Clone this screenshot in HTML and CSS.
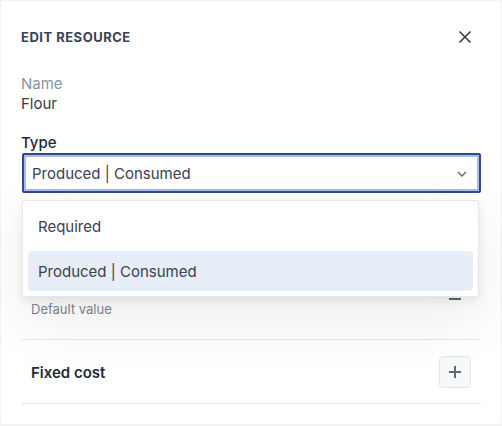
FILE: index.html
```html
<html>
  <head>
    <meta charset="utf-8">
    <title>Edit resource</title>
    <link rel="stylesheet" href="styles.css">
  </head>
<body>

<div class="panel">
  <div class="panel-head">
    <h2>Edit resource</h2>
    <button class="close" title="Close">
      <svg width="14" height="14" viewBox="0 0 14 14"><path d="M1.5 1.5l11 11M12.5 1.5l-11 11" stroke="#3b4350" stroke-width="1.7" fill="none"/></svg>
    </button>
  </div>

  <div class="field">
    <div class="field-label">Name</div>
    <div class="field-value">Flour</div>
  </div>

  <div class="field type-field">
    <label class="type-label">Type</label>
    <div class="select">
      <span>Produced | Consumed</span>
      <svg width="10" height="6" viewBox="0 0 10 6"><path d="M1 1l4 4 4-4" stroke="#5f6876" stroke-width="1.4" fill="none"/></svg>
    </div>

    <!-- open dropdown -->
    <ul class="menu">
      <li>Required</li>
      <li class="active">Produced | Consumed</li>
    </ul>
  </div>

  <div class="row row-default">
    <div class="row-hint">Default value</div>
    <button class="icon-btn flat">
      <svg width="14" height="14" viewBox="0 0 14 14"><path d="M1 7h12" stroke="#5f6876" stroke-width="2"/></svg>
    </button>
  </div>

  <div class="row row-cost">
    <div class="row-title">Fixed cost</div>
    <button class="icon-btn">
      <svg width="14" height="14" viewBox="0 0 14 14"><path d="M1 7h12M7 1v12" stroke="#5f6876" stroke-width="2"/></svg>
    </button>
  </div>
</div>

</body></html>
```

FILE: styles.css
```css
body {
  margin: 0;
  padding: 1px;
  background: #f2f2f3;
  font-family: Inter, "Noto Sans", sans-serif;
  color: #333c48;
}

.panel {
  background: #fff;
  border-radius: 3px;
  height: 423px;
  box-sizing: border-box;
  padding: 22px 20px 0 20px;
}

.panel-head {
  display: flex;
  align-items: center;
  justify-content: space-between;
  height: 28px;
}

.panel-head h2 {
  margin: 0;
  font-size: 13px;
  font-weight: 700;
  text-transform: uppercase;
  letter-spacing: 0.5px;
  color: #3b4350;
}

.close {
  border: none;
  background: none;
  padding: 0;
  margin-right: 9px;
  width: 14px;
  height: 14px;
}

.field {
  margin-top: 23px;
  font-size: 15px;
  line-height: 20px;
}

.field-label {
  color: #8792a2;
}

.field-value {
  color: #333c48;
}

.type-field {
  position: relative;
  margin-top: 19px;
  margin-bottom: 66px;
}

.type-label {
  display: block;
  font-weight: 500;
  color: #222a35;
}

.select {
  display: flex;
  align-items: center;
  justify-content: space-between;
  height: 40px;
  margin-left: 1px;
  padding: 2px 12px 0 8px;
  box-sizing: border-box;
  border: 2px solid #2e4b8b;
  border-radius: 2px;
  box-shadow: inset 0 0 0 2px #a9bde0;
  color: #3a4250;
}

.menu {
  position: absolute;
  top: 67px;
  left: 1px;
  right: 2px;
  margin: 0;
  padding: 5px;
  list-style: none;
  background: #fff;
  border: 1px solid #e4e7ec;
  border-radius: 2px;
  box-shadow: 0 4px 10px rgba(0, 0, 0, 0.08), 0 20px 60px rgba(0, 0, 0, 0.08);
  z-index: 2;
}

.menu li {
  height: 40px;
  line-height: 41px;
  padding: 0 10px;
  border-radius: 4px;
  color: #3a4250;
}

.menu li + li {
  margin-top: 5px;
}

.menu li.active {
  background: #e7eef8;
}

.row {
  display: flex;
  align-items: center;
  justify-content: space-between;
  border-bottom: 1px solid #e3e4e8;
  padding: 0 10px;
}

.row-default {
  height: 80px;
}

.row-cost {
  height: 62px;
  padding-top: 1px;
}

.row-title {
  font-size: 15px;
  font-weight: 600;
  color: #222a35;
}

.row-hint {
  padding-top: 20px;
  font-size: 13px;
  line-height: 18px;
  color: #7c8594;
}

.icon-btn {
  width: 32px;
  height: 32px;
  display: flex;
  align-items: center;
  justify-content: center;
  padding: 0;
  border: 1px solid #e3e5ea;
  border-radius: 4px;
  background: #f7f8fa;
}

.icon-btn.flat {
  border: none;
  background: none;
}
```
